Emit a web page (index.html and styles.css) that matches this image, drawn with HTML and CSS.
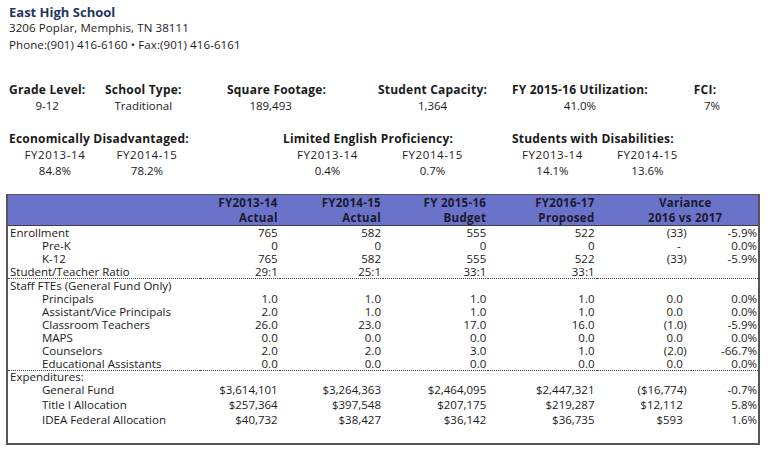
FILE: index.html
```html
<!DOCTYPE html>
<html>
<head>
<meta charset="utf-8">
<link rel="stylesheet" href="styles.css">
</head>
<body>
<div class="page">
  <header class="school">
    <h1 class="school-name">East High School</h1>
    <div class="school-line addr">3206 Poplar, Memphis, TN 38111</div>
    <div class="school-line phone">Phone:(901) 416-6160 &bull; Fax:(901) 416-6161</div>
  </header>

  <section class="stats">
    <div class="stat s1"><div class="stat-label">Grade Level:</div><div class="stat-val">9-12</div></div>
    <div class="stat s2"><div class="stat-label">School Type:</div><div class="stat-val">Traditional</div></div>
    <div class="stat s3"><div class="stat-label">Square Footage:</div><div class="stat-val shift-l">189,493</div></div>
    <div class="stat s4"><div class="stat-label">Student Capacity:</div><div class="stat-val">1,364</div></div>
    <div class="stat s5"><div class="stat-label">FY 2015-16 Utilization:</div><div class="stat-val">41.0%</div></div>
    <div class="stat s6"><div class="stat-label">FCI:</div><div class="stat-val shift-r">7%</div></div>
  </section>

  <section class="demo">
    <div class="group g1">
      <div class="group-title">Economically Disadvantaged:</div>
      <div class="group-grid">
        <div class="yr">FY2013-14</div><div class="yr">FY2014-15</div>
        <div class="pv">84.8%</div><div class="pv">78.2%</div>
      </div>
    </div>
    <div class="group g2">
      <div class="group-title">Limited English Proficiency:</div>
      <div class="group-grid">
        <div class="yr">FY2013-14</div><div class="yr">FY2014-15</div>
        <div class="pv">0.4%</div><div class="pv">0.7%</div>
      </div>
    </div>
    <div class="group g3">
      <div class="group-title">Students with Disabilities:</div>
      <div class="group-grid">
        <div class="yr">FY2013-14</div><div class="yr">FY2014-15</div>
        <div class="pv">14.1%</div><div class="pv">13.6%</div>
      </div>
    </div>
  </section>

  <table class="budget">
    <colgroup>
      <col class="c-label"><col class="c-a"><col class="c-b"><col class="c-c"><col class="c-d"><col class="c-v"><col class="c-p">
    </colgroup>
    <thead>
      <tr>
        <th></th>
        <th class="num">FY2013-14<br>Actual</th>
        <th class="num">FY2014-15<br>Actual</th>
        <th class="num">FY 2015-16<br>Budget</th>
        <th class="num">FY2016-17<br>Proposed</th>
        <th class="var-h" colspan="2">Variance<br>2016 vs 2017</th>
      </tr>
    </thead>
    <tbody>
      <tr><td class="lbl">Enrollment</td><td class="num">765</td><td class="num">582</td><td class="num">555</td><td class="num">522</td><td class="vn">(33)</td><td class="pct">-5.9%</td></tr>
      <tr><td class="lbl ind">Pre-K</td><td class="num">0</td><td class="num">0</td><td class="num">0</td><td class="num">0</td><td class="vn dash">-</td><td class="pct">0.0%</td></tr>
      <tr><td class="lbl ind">K-12</td><td class="num">765</td><td class="num">582</td><td class="num">555</td><td class="num">522</td><td class="vn">(33)</td><td class="pct">-5.9%</td></tr>
      <tr><td class="lbl">Student/Teacher Ratio</td><td class="num">29:1</td><td class="num">25:1</td><td class="num">33:1</td><td class="num">33:1</td><td class="vn"></td><td class="pct"></td></tr>

      <tr class="sep"><td class="lbl" colspan="7">Staff FTEs (General Fund Only)</td></tr>
      <tr><td class="lbl ind">Principals</td><td class="num">1.0</td><td class="num">1.0</td><td class="num">1.0</td><td class="num">1.0</td><td class="vn np">0.0</td><td class="pct">0.0%</td></tr>
      <tr><td class="lbl ind">Assistant/Vice Principals</td><td class="num">2.0</td><td class="num">1.0</td><td class="num">1.0</td><td class="num">1.0</td><td class="vn np">0.0</td><td class="pct">0.0%</td></tr>
      <tr><td class="lbl ind">Classroom Teachers</td><td class="num">26.0</td><td class="num">23.0</td><td class="num">17.0</td><td class="num">16.0</td><td class="vn">(1.0)</td><td class="pct">-5.9%</td></tr>
      <tr><td class="lbl ind">MAPS</td><td class="num">0.0</td><td class="num">0.0</td><td class="num">0.0</td><td class="num">0.0</td><td class="vn np">0.0</td><td class="pct">0.0%</td></tr>
      <tr><td class="lbl ind">Counselors</td><td class="num">2.0</td><td class="num">2.0</td><td class="num">3.0</td><td class="num">1.0</td><td class="vn">(2.0)</td><td class="pct">-66.7%</td></tr>
      <tr><td class="lbl ind">Educational Assistants</td><td class="num">0.0</td><td class="num">0.0</td><td class="num">0.0</td><td class="num">0.0</td><td class="vn np">0.0</td><td class="pct">0.0%</td></tr>

      <tr class="sep exp-head"><td class="lbl" colspan="7">Expenditures:</td></tr>
      <tr class="exp"><td class="lbl ind">General Fund</td><td class="num">$3,614,101</td><td class="num">$3,264,363</td><td class="num">$2,464,095</td><td class="num">$2,447,321</td><td class="vn">($16,774)</td><td class="pct">-0.7%</td></tr>
      <tr class="exp"><td class="lbl ind">Title I Allocation</td><td class="num">$257,364</td><td class="num">$397,548</td><td class="num">$207,175</td><td class="num">$219,287</td><td class="vn np">$12,112</td><td class="pct">5.8%</td></tr>
      <tr class="exp"><td class="lbl ind">IDEA Federal Allocation</td><td class="num">$40,732</td><td class="num">$38,427</td><td class="num">$36,142</td><td class="num">$36,735</td><td class="vn np">$593</td><td class="pct">1.6%</td></tr>
      <tr class="blank"><td colspan="7"></td></tr>
    </tbody>
  </table>
</div>
</body>
</html>
```

FILE: styles.css
```css
html, body {
  margin: 0;
  padding: 0;
  background: #ffffff;
}

body {
  font-family: "Open Sans", "Noto Sans", "DejaVu Sans", sans-serif;
  color: #1a1a1a;
}

.page {
  width: 774px;
  height: 454px;
  overflow: hidden;
}

/* header */
.school {
  padding: 3px 0 0 9px;
}

.school-name {
  margin: 0;
  font-size: 13px;
  line-height: 18px;
  font-weight: 700;
  color: #1f3763;
}

.school-line {
  font-size: 11.5px;
  line-height: 16px;
  letter-spacing: 0.1px;
}

.addr {
  margin-top: -1px;
}

.phone {
  margin-top: 1px;
}

/* stats row */
.stats {
  display: grid;
  grid-template-columns: 96px 122px 151px 134px 178px 60px;
  margin-top: 29px;
  padding-left: 9px;
}

.stat {
  display: inline-flex;
  flex-direction: column;
  align-items: center;
  justify-self: start;
}

.stat-label {
  font-size: 12px;
  font-weight: 700;
  line-height: 16px;
  letter-spacing: 0.2px;
  white-space: nowrap;
}

.stat-val {
  font-size: 11.5px;
  line-height: 16px;
}

.shift-l {
  margin-right: 12px;
}

.shift-r {
  margin-left: 14px;
}

/* demographics */
.demo {
  display: grid;
  grid-template-columns: 274px 229px 1fr;
  margin-top: 17px;
  padding-left: 9px;
}

.group-title {
  font-size: 12px;
  font-weight: 700;
  line-height: 16px;
  letter-spacing: 0.2px;
  white-space: nowrap;
}

.group-grid {
  display: grid;
  grid-template-columns: 92px 92px;
  justify-items: center;
  width: max-content;
}

.g1 .group-grid {
  margin-left: 0;
}

.g2 .group-grid {
  grid-template-columns: 105px 105px;
  margin-left: -8px;
}

.g3 .group-grid {
  grid-template-columns: 95px 95px;
  margin-left: -7px;
}

.yr {
  font-size: 11.5px;
  line-height: 16px;
  letter-spacing: 0.6px;
}

.pv {
  font-size: 11.5px;
  line-height: 15px;
}

/* table */
.budget {
  margin: 16px 0 0 6px;
  width: 754px;
  border-collapse: collapse;
  table-layout: fixed;
  font-size: 11.5px;
  border: 2px solid #555555;
  border-top-width: 1px;
}

.c-label { width: 192px; }
.c-a { width: 80px; }
.c-b { width: 103px; }
.c-c { width: 105px; }
.c-d { width: 108px; }
.c-v { width: 94px; }
.c-p { width: 68px; }

.budget th,
.budget td {
  padding: 0;
  white-space: nowrap;
  line-height: 13px;
  height: 13px;
}

.budget thead th {
  background: #6b72c9;
  color: #1b1b2e;
  font-weight: 700;
  letter-spacing: 0.3px;
  line-height: 15px;
  height: 30px;
  border-bottom: 1px solid #3c3c5a;
}

.budget th.num,
.budget td.num {
  text-align: right;
  padding-right: 2px;
}

.budget th.var-h {
  text-align: center;
  padding-left: 16px;
}

.lbl {
  text-align: left;
  padding-left: 2px !important;
}

.lbl.ind {
  padding-left: 34px !important;
}

.vn {
  text-align: right;
  padding-right: 4px !important;
}

.vn.np {
  padding-right: 8px !important;
}

.vn.dash {
  padding-right: 10px !important;
}

.pct {
  text-align: right;
  padding-right: 1px !important;
}

.sep td {
  border-top: 1px dotted #444444;
}

.exp-head td {
  line-height: 11px;
  height: 11px;
}

.exp td {
  line-height: 15px;
  height: 15px;
}

.blank td {
  height: 16px;
}
```
